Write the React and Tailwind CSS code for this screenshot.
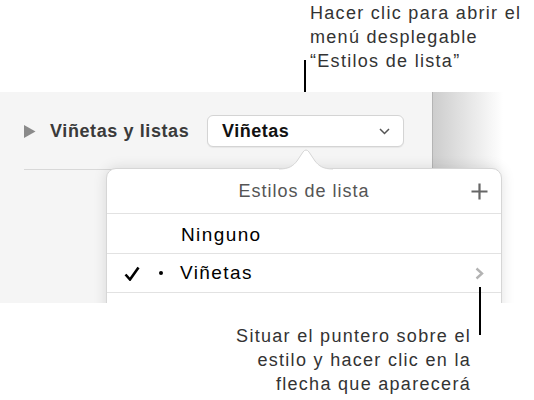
import React from "react";

const Note = ({ lines, className }) => (
  <div className={className}>
    {lines.map(line => (
      <div key={line} className="whitespace-nowrap">
        {line}
      </div>
    ))}
  </div>
);

const App = () => {
  return (
    <div className="relative w-[534px] h-[400px] overflow-hidden bg-white font-['Liberation_Sans',Arial,sans-serif] text-[#333]">
      {/* TOP CALLOUT */}
      <div className="h-[92px] pl-[310px] pt-px">
        <Note
          lines={["Hacer clic para abrir el", "menú desplegable", "“Estilos de lista”"]}
          className="text-[18px] leading-[24px] tracking-[1.3px]"
        />
      </div>
      <div className="absolute left-[304px] top-[60px] w-[1.5px] h-[55px] bg-black" />

      {/* PANEL */}
      <div className="relative flex h-[211px] overflow-hidden">
        <div className="w-[433px] bg-[#f5f5f5] border-r border-[#b4b4b4]">
          <div className="mt-[23px] flex items-center h-[32px] pl-[24px]">
            <svg width="12" height="13" viewBox="0 0 12 13">
              <polygon points="0,0 11.5,6.5 0,13" fill="#8a8a8a" />
            </svg>
            <div className="ml-[14px] w-[157px] text-[18px] font-bold tracking-[0.6px] text-[#3a3a3a]">
              Viñetas y listas
            </div>
            <div className="flex items-center justify-between w-[197px] h-[32px] pl-[14px] pr-[13px] rounded-[6px] border border-[#d4d4d4] bg-white shadow-[0_1px_1px_rgba(0,0,0,0.06)]">
              <span className="text-[18px] font-bold tracking-[0.5px] text-[#111]">Viñetas</span>
              <svg width="11" height="7" viewBox="0 0 11 7">
                <path d="M1 1 L5.5 5.5 L10 1" fill="none" stroke="#555" strokeWidth="1.5" />
              </svg>
            </div>
          </div>
          <div className="mt-[22px] ml-[24px] h-px bg-[#d8d8d8]" />
        </div>
        <div className="w-[70px] bg-gradient-to-r from-[#cdcdcd] to-white" />
        <div className="flex-1" />

        {/* POPOVER MENU */}
        <div className="absolute left-[106px] top-[76px] w-[396px] h-[170px] rounded-t-[10px] border border-[#d6d6d6] bg-white shadow-[0_0_14px_rgba(0,0,0,0.12)]">
          <svg
            className="absolute left-[172px] -top-[20px]"
            width="54"
            height="21"
            viewBox="0 0 54 21"
          >
            <path
              d="M0 21 L0 20 C10 20 14 17 18 12 L24 3 Q27 -1 30 3 L36 12 C40 17 44 20 54 20 L54 21 Z"
              fill="white"
            />
            <path
              d="M0 20 C10 20 14 17 18 12 L24 3 Q27 -1 30 3 L36 12 C40 17 44 20 54 20"
              fill="none"
              stroke="#d6d6d6"
              strokeWidth="1"
            />
          </svg>

          <div className="flex items-center h-[45px] border-b border-[#e2e2e2] px-[13px]">
            <div className="w-[17px]" />
            <div className="flex-1 text-center text-[18px] tracking-[1px] text-[#555]">
              Estilos de lista
            </div>
            <svg width="17" height="17" viewBox="0 0 17 17">
              <path d="M8.5 0.5 V16.5 M0.5 8.5 H16.5" stroke="#666" strokeWidth="2.2" />
            </svg>
          </div>

          <div className="flex items-center h-[40px] border-b border-[#e2e2e2] pl-[74px] pt-[3px] text-[19px] tracking-[1.4px] text-black">
            Ninguno
          </div>

          <div className="flex items-center h-[39px] border-b border-[#e2e2e2] pl-[17px] pr-[17px] text-[19px] tracking-[1.4px] text-black">
            <svg width="16" height="15" viewBox="0 0 16 15">
              <path d="M1.5 8.5 L6 13.5 L14.5 1.5" fill="none" stroke="#000" strokeWidth="2.6" />
            </svg>
            <div className="ml-[19px] w-[4px] h-[4px] rounded-full bg-black" />
            <div className="ml-[17px] flex-1">Viñetas</div>
            <svg width="9" height="13" viewBox="0 0 9 13">
              <path d="M1.5 1.5 L7 6.5 L1.5 11.5" fill="none" stroke="#b3b3b3" strokeWidth="2.4" />
            </svg>
          </div>
        </div>
      </div>

      {/* BOTTOM CALLOUT */}
      <div className="flex justify-end pr-[63px] pt-[21px]">
        <Note
          lines={["Situar el puntero sobre el", "estilo y hacer clic en la", "flecha que aparecerá"]}
          className="text-right text-[18px] leading-[24px] tracking-[1.3px]"
        />
      </div>
      <div className="absolute left-[479px] top-[287px] w-[1.5px] h-[48px] bg-black" />
    </div>
  );
};

export default App;
